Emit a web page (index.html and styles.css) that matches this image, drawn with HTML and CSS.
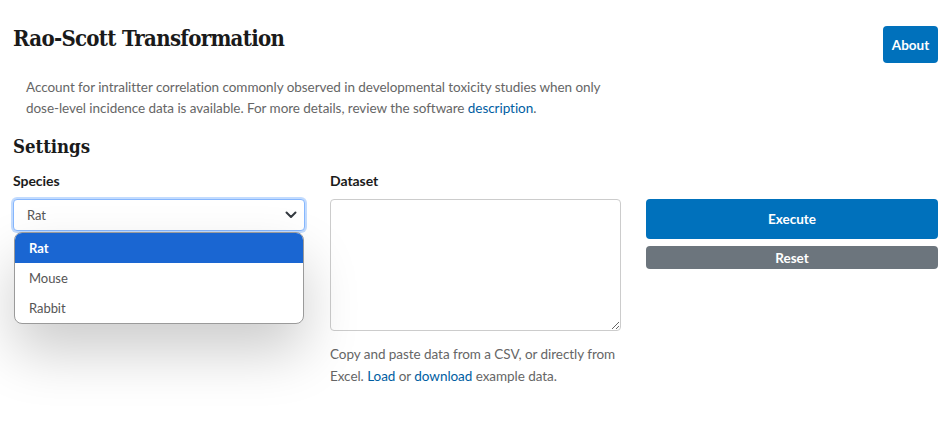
FILE: index.html
```html
<!DOCTYPE html>
<html lang="en">
<head>
<meta charset="utf-8">
<title>Rao-Scott Transformation</title>
<link rel="stylesheet" href="styles.css">
</head>
<body>
<div class="page">
  <header class="header">
    <h1 class="title">Rao-Scott Transformation</h1>
    <button class="btn btn-about" type="button">About</button>
  </header>
  <p class="lead">Account for intralitter correlation commonly observed in developmental toxicity studies when only dose-level incidence data is available. For more details, review the software <a href="#" class="link">description</a>.</p>
  <h2 class="section-title">Settings</h2>
  <div class="settings">
    <div class="col">
      <label class="label">Species</label>
      <div class="select-wrap">
        <div class="select">
          <span>Rat</span>
          <svg class="chevron" width="12" height="8" viewBox="0 0 12 8"><path d="M1.5 1.5 L6 6 L10.5 1.5" fill="none" stroke="#343a40" stroke-width="2" stroke-linecap="round" stroke-linejoin="round"/></svg>
        </div>
        <ul class="menu">
          <li class="opt opt-active">Rat</li>
          <li class="opt">Mouse</li>
          <li class="opt">Rabbit</li>
        </ul>
      </div>
    </div>
    <div class="col">
      <label class="label">Dataset</label>
      <textarea class="textarea"></textarea>
      <p class="help">Copy and paste data from a CSV, or directly from Excel. <a href="#" class="link">Load</a> or <a href="#" class="link">download</a> example data.</p>
    </div>
    <div class="col col-actions">
      <button class="btn btn-exec" type="button">Execute</button>
      <button class="btn btn-reset" type="button">Reset</button>
    </div>
  </div>
</div>
</body>
</html>
```
FILE: styles.css
```css
* { box-sizing: border-box; }
html, body { margin: 0; padding: 0; background: #fff; height: 100%; }
body {
  font-family: Lato, "Liberation Sans", sans-serif;
  font-size: 13.5px;
  letter-spacing: -0.05px;
  color: #212529;
}
.page { padding: 26px 14px 0 13px; min-height: 100%; }
.header {
  display: flex;
  justify-content: space-between;
  align-items: flex-start;
}
.title {
  margin: 0;
  font-family: "DejaVu Serif", "Liberation Serif", serif;
  font-stretch: condensed;
  font-weight: bold;
  font-size: 22px;
  line-height: 24px;
  color: #1a1a1a;
  letter-spacing: -0.7px;
}
.btn {
  border: none;
  border-radius: 4px;
  color: #fff;
  font-family: Lato, "Liberation Sans", sans-serif;
  font-weight: bold;
  font-size: 13.5px;
  cursor: pointer;
  padding: 0;
}
.btn-about {
  background: #0071bc;
  width: 55px;
  height: 37px;
}
.lead {
  margin: 14px 0 0 13px;
  width: 590px;
  line-height: 21px;
  color: #666;
}
.link { color: #005ea2; text-decoration: none; }
.section-title {
  margin: 16px 0 0;
  font-family: "DejaVu Serif", "Liberation Serif", serif;
  font-stretch: condensed;
  font-weight: bold;
  font-size: 18.5px;
  line-height: 24px;
  color: #1a1a1a;
}
.settings {
  display: grid;
  grid-template-columns: 292px 291px 292px;
  column-gap: 25px;
  margin-top: 12px;
}
.col { display: flex; flex-direction: column; }
.label {
  font-weight: bold;
  font-size: 14px;
  line-height: 20px;
  color: #1b1b1b;
  margin-bottom: 8px;
}
.select-wrap { position: relative; }
.select {
  height: 32px;
  border: 1px solid #86b7fe;
  box-shadow: 0 0 0 2px rgba(13,110,253,0.25);
  border-radius: 4px;
  display: flex;
  align-items: center;
  justify-content: space-between;
  padding: 0 7px 0 13px;
  font-size: 13px;
  color: #555;
  background: #fff;
}
.menu {
  position: absolute;
  left: 1px;
  right: 1px;
  top: 33px;
  margin: 0;
  padding: 0;
  list-style: none;
  background: #fff;
  border: 1px solid #9a9a9a;
  border-radius: 8px;
  overflow: hidden;
  box-shadow: 0 28px 56px rgba(0,0,0,0.2);
}
.opt {
  height: 30px;
  line-height: 30px;
  padding-left: 14px;
  font-size: 13px;
  color: #555;
}
.opt-active { background: #1a66d2; color: #fff; font-weight: bold; }
.textarea {
  height: 132px;
  border: 1px solid #ccc;
  border-radius: 4px;
  resize: vertical;
  font-family: inherit;
}
.help {
  margin: 12px 0 0;
  line-height: 22px;
  color: #666;
}
.col-actions { padding-top: 28px; gap: 7px; }
.btn-exec { background: #0071bc; height: 40px; }
.btn-reset { background: #6c757d; height: 23px; }
```
